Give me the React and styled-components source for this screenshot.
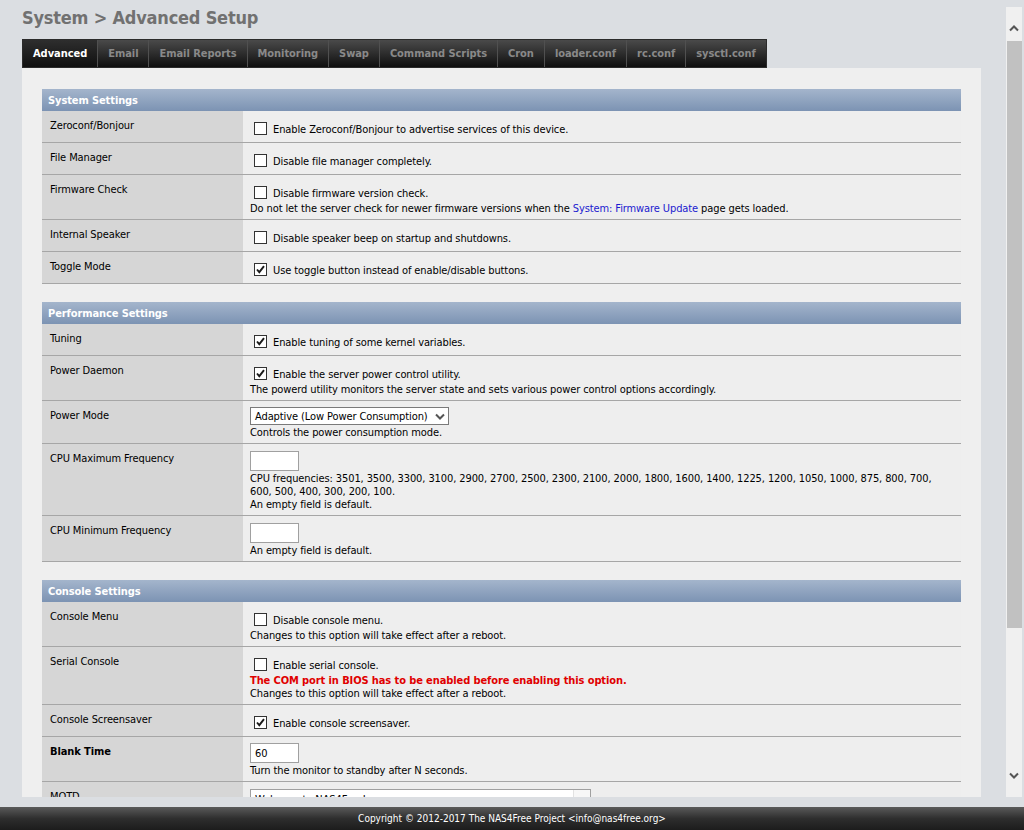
import React from "react";
import styled, { createGlobalStyle } from "styled-components";

const GlobalStyle = createGlobalStyle`
  html, body {
    margin: 0;
    padding: 0;
    background: #dbdee2;
    overflow: hidden;
  }
  body {
    font-family: "DejaVu Sans Condensed", "Liberation Sans", Arial, sans-serif;
    font-size: 11px;
    letter-spacing: -0.1px;
    color: #000;
  }
`;

const Shell = styled.div`
  display: flex;
  flex-direction: column;
  height: 830px;
`;

const Frame = styled.div`
  display: flex;
  align-items: flex-start;
  height: 807px;
`;

const Viewport = styled.div`
  flex: 0 0 1006px;
  box-sizing: border-box;
  height: 797px;
  overflow: hidden;
  padding: 0 25px 0 22px;
`;

const Title = styled.h1`
  margin: 0 0 10px;
  padding-top: 7px;
  font-size: 18px;
  line-height: 22px;
  letter-spacing: -0.2px;
  font-weight: bold;
  color: #717171;
`;

const TabBar = styled.div`
  display: flex;
  width: max-content;
  height: 29px;
  box-sizing: border-box;
  border: 1px solid #2b2b2b;
  background: linear-gradient(#4a4a4a, #2a2a2a 55%, #0f0f0f);
`;

const Tab = styled.div`
  display: flex;
  align-items: center;
  padding: 0 10px;
  font-weight: bold;
  font-size: 11px;
  letter-spacing: -0.05px;
  color: ${(p) => (p.$active ? "#ffffff" : "#898989")};
  background: ${(p) => (p.$active ? "linear-gradient(#2e2e2e, #101010)" : "transparent")};
  border-right: 1px solid #505050;
  &:last-child {
    border-right: 0;
  }
`;

const Panel = styled.div`
  background: #efefef;
  padding: 21px 20px 0;
`;

const Section = styled.div`
  margin-bottom: 18px;
`;

const SectionHeader = styled.div`
  height: 22px;
  line-height: 23px;
  padding-left: 6px;
  font-weight: bold;
  color: #fff;
  background: linear-gradient(#a4b5cc, #7c93b3);
`;

const Row = styled.div`
  display: grid;
  grid-template-columns: 201px 1fr;
  border-bottom: 1px solid #a6a6a6;
`;

const Label = styled.div`
  background: #d6d6d6;
  padding: 8px 8px 0;
  line-height: 13px;
  font-weight: ${(p) => (p.$bold ? "bold" : "normal")};
`;

const Value = styled.div`
  background: #eeeeee;
  padding: 5px 7px 4px;
  line-height: 13px;
`;

const CheckLine = styled.div`
  display: flex;
  align-items: flex-end;
  height: 22px;
  padding-bottom: 2px;
  box-sizing: border-box;
`;

const Box = styled.span`
  box-sizing: border-box;
  width: 13px;
  height: 13px;
  margin: 0 6px 1px 4px;
  border: 1px solid #333;
  background: #fff;
  display: inline-flex;
`;

const Note = styled.div`
  line-height: 13px;
  color: ${(p) => (p.$warn ? "#e00000" : "#000")};
  font-weight: ${(p) => (p.$warn ? "bold" : "normal")};
`;

const Link = styled.a`
  color: #1b1bd0;
  text-decoration: none;
`;

const Select = styled.div`
  display: flex;
  align-items: center;
  justify-content: space-between;
  box-sizing: border-box;
  width: 199px;
  height: 18px;
  margin: 1px 0;
  padding: 0 3px 0 4px;
  border: 1px solid #7a7a7a;
  background: #fff;
`;

const TextInput = styled.div`
  box-sizing: border-box;
  width: 49px;
  height: 20px;
  margin: ${(p) => (p.$spaced ? "2px 0 1px" : "1px 0")};
  padding: 0 4px;
  line-height: 19px;
  border: 1px solid #a0a0a0;
  background: #fff;
`;

const TextArea = styled.div`
  display: flex;
  box-sizing: border-box;
  width: 341px;
  height: 60px;
  margin-top: 2px;
  border: 1px solid #a0a0a0;
  background: #fff;
`;

const TextBody = styled.div`
  flex: 1;
  padding: 3px 4px;
`;

const MiniScroll = styled.div`
  width: 16px;
  border-left: 1px solid #e2e2e2;
  background: #f7f7f7;
`;

const ScrollBar = styled.div`
  display: flex;
  flex-direction: column;
  width: 16px;
  height: 790px;
  margin-top: 7px;
  background: #f0f0f0;
`;

const ScrollButton = styled.div`
  display: flex;
  justify-content: center;
  height: 34px;
  box-sizing: border-box;
  padding-top: ${(p) => p.$top}px;
`;

const Thumb = styled.div`
  height: 587px;
  margin-left: 1px;
  background: #c1c1c1;
`;

const Track = styled.div`
  flex: 1;
`;

const Footer = styled.div`
  height: 23px;
  line-height: 23px;
  font-size: 10px;
  letter-spacing: 0;
  text-align: center;
  color: #fff;
  background: linear-gradient(#5a5a5a, #2e2e2e 50%, #1c1c1c);
`;

const Chevron = ({ down }) => (
  <svg width="10" height="7" viewBox="0 0 10 7">
    <polyline
      points={down ? "1,1.5 5,5.5 9,1.5" : "1,5.5 5,1.5 9,5.5"}
      fill="none"
      stroke="#555"
      strokeWidth="2"
    />
  </svg>
);

const Checkbox = ({ checked }) => (
  <Box>
    {checked && (
      <svg width="11" height="11" viewBox="0 0 11 11">
        <polyline points="2,5.5 4.3,8.2 9,2.2" fill="none" stroke="#1a1a1a" strokeWidth="1.9" />
      </svg>
    )}
  </Box>
);

const CheckOption = ({ checked, children }) => (
  <CheckLine>
    <Checkbox checked={checked} />
    <span>{children}</span>
  </CheckLine>
);

const SettingRow = ({ label, bold, children }) => (
  <Row>
    <Label $bold={bold}>{label}</Label>
    <Value>{children}</Value>
  </Row>
);

const tabs = [
  "Advanced",
  "Email",
  "Email Reports",
  "Monitoring",
  "Swap",
  "Command Scripts",
  "Cron",
  "loader.conf",
  "rc.conf",
  "sysctl.conf",
];

const App = () => {
  return (
    <>
      <GlobalStyle />
      <Shell>
        <Frame>
          <Viewport>
            <Title>System &gt; Advanced Setup</Title>
            <TabBar>
              {tabs.map((t, i) => (
                <Tab key={t} $active={i === 0}>
                  {t}
                </Tab>
              ))}
            </TabBar>
            <Panel>
              <Section>
                <SectionHeader>System Settings</SectionHeader>
                <SettingRow label="Zeroconf/Bonjour">
                  <CheckOption>Enable Zeroconf/Bonjour to advertise services of this device.</CheckOption>
                </SettingRow>
                <SettingRow label="File Manager">
                  <CheckOption>Disable file manager completely.</CheckOption>
                </SettingRow>
                <SettingRow label="Firmware Check">
                  <CheckOption>Disable firmware version check.</CheckOption>
                  <Note>
                    Do not let the server check for newer firmware versions when the{" "}
                    <Link href="#">System: Firmware Update</Link> page gets loaded.
                  </Note>
                </SettingRow>
                <SettingRow label="Internal Speaker">
                  <CheckOption>Disable speaker beep on startup and shutdowns.</CheckOption>
                </SettingRow>
                <SettingRow label="Toggle Mode">
                  <CheckOption checked>Use toggle button instead of enable/disable buttons.</CheckOption>
                </SettingRow>
              </Section>

              <Section>
                <SectionHeader>Performance Settings</SectionHeader>
                <SettingRow label="Tuning">
                  <CheckOption checked>Enable tuning of some kernel variables.</CheckOption>
                </SettingRow>
                <SettingRow label="Power Daemon">
                  <CheckOption checked>Enable the server power control utility.</CheckOption>
                  <Note>The powerd utility monitors the server state and sets various power control options accordingly.</Note>
                </SettingRow>
                <SettingRow label="Power Mode">
                  <Select>
                    <span>Adaptive (Low Power Consumption)</span>
                    <Chevron down />
                  </Select>
                  <Note>Controls the power consumption mode.</Note>
                </SettingRow>
                <SettingRow label="CPU Maximum Frequency">
                  <TextInput $spaced />
                  <Note>
                    CPU frequencies: 3501, 3500, 3300, 3100, 2900, 2700, 2500, 2300, 2100, 2000, 1800, 1600,
                    1400, 1225, 1200, 1050, 1000, 875, 800, 700,
                    <br />
                    600, 500, 400, 300, 200, 100.
                  </Note>
                  <Note>An empty field is default.</Note>
                </SettingRow>
                <SettingRow label="CPU Minimum Frequency">
                  <TextInput $spaced />
                  <Note>An empty field is default.</Note>
                </SettingRow>
              </Section>

              <Section>
                <SectionHeader>Console Settings</SectionHeader>
                <SettingRow label="Console Menu">
                  <CheckOption>Disable console menu.</CheckOption>
                  <Note>Changes to this option will take effect after a reboot.</Note>
                </SettingRow>
                <SettingRow label="Serial Console">
                  <CheckOption>Enable serial console.</CheckOption>
                  <Note $warn>The COM port in BIOS has to be enabled before enabling this option.</Note>
                  <Note>Changes to this option will take effect after a reboot.</Note>
                </SettingRow>
                <SettingRow label="Console Screensaver">
                  <CheckOption checked>Enable console screensaver.</CheckOption>
                </SettingRow>
                <SettingRow label="Blank Time" bold>
                  <TextInput>60</TextInput>
                  <Note>Turn the monitor to standby after N seconds.</Note>
                </SettingRow>
                <SettingRow label="MOTD">
                  <TextArea>
                    <TextBody>Welcome to NAS4Free!</TextBody>
                    <MiniScroll />
                  </TextArea>
                </SettingRow>
              </Section>
            </Panel>
          </Viewport>
          <ScrollBar>
            <ScrollButton $top={18}>
              <Chevron />
            </ScrollButton>
            <Thumb />
            <Track />
            <ScrollButton $top={9}>
              <Chevron down />
            </ScrollButton>
          </ScrollBar>
        </Frame>
        <Footer>Copyright © 2012-2017 The NAS4Free Project &lt;info@nas4free.org&gt;</Footer>
      </Shell>
    </>
  );
};

export default App;
